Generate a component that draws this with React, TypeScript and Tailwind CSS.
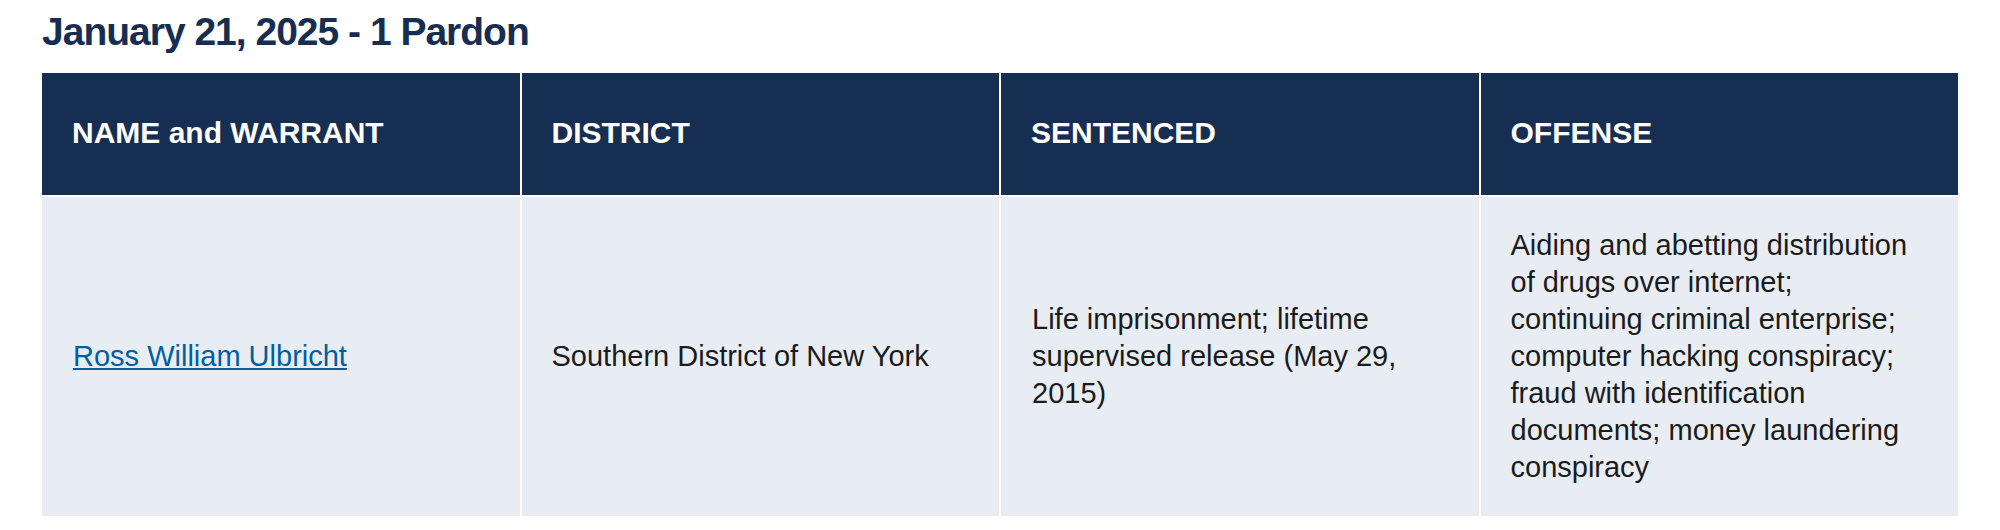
const HEADERS = ["NAME and WARRANT", "DISTRICT", "SENTENCED", "OFFENSE"];

export default function App() {
  return (
    <div className="min-h-screen bg-white px-[42px] pt-[10px] font-['Liberation_Sans',Arial,sans-serif]">
      <h2 className="text-[39px] leading-[44px] font-bold tracking-[-1px] text-[#162e51] mb-[19px]">
        January 21, 2025 - 1 Pardon
      </h2>

      <div className="grid grid-cols-4 gap-[2px] bg-white">
        {/* Header row */}
        {HEADERS.map((h) => (
          <div
            key={h}
            className="h-[122px] flex items-center pb-[3px] pl-[30px] pr-[30px] bg-[#162e51] text-white text-[30px] font-bold"
          >
            {h}
          </div>
        ))}

        {/* Body row */}
        <div className="flex items-center px-[31px] bg-[#e8edf4] text-[29px] leading-[37px]">
          <a href="#" className="text-[#005ea2] underline">
            Ross William Ulbricht
          </a>
        </div>
        <div className="flex items-center px-[30px] bg-[#e8edf4] text-[29px] leading-[37px] text-[#1b1b1b]">
          Southern District of New York
        </div>
        <div className="flex items-center px-[31px] bg-[#e8edf4] text-[29px] leading-[37px] text-[#1b1b1b]">
          Life imprisonment; lifetime supervised release (May 29, 2015)
        </div>
        <div className="flex items-center px-[30px] py-[30px] bg-[#e8edf4] text-[29px] leading-[37px] text-[#1b1b1b]">
          Aiding and abetting distribution of drugs over internet; continuing criminal enterprise; computer hacking
          conspiracy; fraud with identification documents; money laundering conspiracy
        </div>
      </div>
    </div>
  );
}
